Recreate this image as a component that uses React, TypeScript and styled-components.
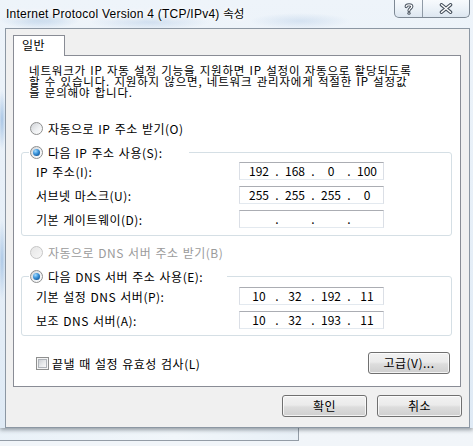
import React from "react";
import styled, { createGlobalStyle } from "styled-components";

const Global = createGlobalStyle`
  html, body { margin: 0; padding: 0; }
  body {
    width: 473px; height: 446px; overflow: hidden;
    background: #f4f7fa;
    font-family: "Noto Sans CJK KR", "Noto Sans", sans-serif;
    font-size: 12px; color: #000;
  }
`;

const Desktop = styled.div`
  position: relative;
  width: 473px;
  height: 446px;
  overflow: hidden;
  background: linear-gradient(180deg, #f7fafc 0%, #f1f5f9 100%);
`;

const BackWindow = styled.div`
  position: absolute;
  left: -10px;
  top: 300px;
  width: 307px;
  height: 139px;
  border: 1px solid #939ca6;
  background: linear-gradient(90deg, #e9f1f8 0%, #f1f6fa 60%, #e8f0f7 100%);
`;

const Window = styled.div`
  position: absolute;
  left: 0;
  top: 0;
  width: 473px;
  height: 428px;
  display: flex;
  flex-direction: column;
  box-shadow: 0 2px 4px rgba(40, 50, 60, 0.45);
  background:
    radial-gradient(ellipse 40px 9px at 40px 20px, rgba(120, 165, 210, 0.35), transparent),
    radial-gradient(ellipse 60px 8px at 150px 22px, rgba(140, 175, 215, 0.3), transparent),
    radial-gradient(ellipse 50px 8px at 300px 21px, rgba(140, 175, 215, 0.25), transparent),
    radial-gradient(ellipse 4px 30px at 2px 120px, rgba(90, 145, 205, 0.45), transparent),
    radial-gradient(ellipse 4px 40px at 2px 260px, rgba(90, 145, 205, 0.4), transparent),
    linear-gradient(180deg, #eef4fa 0%, #dfeaf5 100%);
`;

const TitleBar = styled.div`
  height: 28px;
  display: flex;
  align-items: flex-start;
  flex: none;
`;

const Title = styled.div`
  padding: 5px 0 0 6px;
  line-height: 17px;
  font-family: "Liberation Sans", "Noto Sans CJK KR", sans-serif;
  font-size: 12px;
  letter-spacing: 0.25px;
  color: #000;
  text-shadow: 0 0 6px #fff, 0 0 10px #fff, 0 0 3px #fff;
  white-space: nowrap;
`;

const TitleKo = styled.span`
  font-family: "Noto Sans CJK KR", sans-serif;
  font-size: 11.5px;
  letter-spacing: 0;
`;

const Captions = styled.div`
  margin-left: auto;
  margin-right: 3px;
  display: flex;
  height: 18px;
  border: 1px solid #7d8894;
  border-top: none;
  border-radius: 0 0 5px 5px;
  overflow: hidden;
  background: linear-gradient(180deg, rgba(255,255,255,0.55) 0%, rgba(235,241,247,0.7) 50%, rgba(215,226,237,0.75) 100%);
  box-sizing: border-box;
`;

const CapButton = styled.div<{ $w: number; $divider?: boolean }>`
  width: ${(p) => p.$w}px;
  height: 100%;
  display: flex;
  align-items: center;
  justify-content: center;
  box-sizing: border-box;
  border-right: ${(p) => (p.$divider ? "1px solid #8f9aa6" : "none")};
`;

const Body = styled.div`
  flex: 1;
  margin: 0 3px 0 5px;
  border: 1px solid #8c97a3;
  background: #f0f0f0;
  display: flex;
  flex-direction: column;
  letter-spacing: 0.5px;
  word-spacing: 1px;
`;

const TabStrip = styled.div`
  display: flex;
  padding: 6px 0 0 7px;
`;

const Tab = styled.div`
  position: relative;
  z-index: 1;
  width: 52px;
  height: 21px;
  box-sizing: border-box;
  border: 1px solid #898c95;
  border-bottom: none;
  background: #fff;
  margin-bottom: -1px;
  padding-left: 8px;
  line-height: 17px;
  font-size: 12px;
`;

const Panel = styled.div`
  position: relative;
  z-index: 0;
  margin: 0 8px 0 7px;
  height: 332px;
  box-sizing: border-box;
  border: 1px solid #898c95;
  background: #fff;
  padding-top: 9px;
  display: flex;
  flex-direction: column;
`;

const Description = styled.div`
  height: 33px;
  padding-left: 15px;
  line-height: 11px;
  font-size: 11.5px;
  letter-spacing: 0.8px;
  white-space: nowrap;
`;

const RadioLine = styled.div<{ $mt: number; $disabled?: boolean }>`
  display: flex;
  align-items: center;
  gap: 5px;
  height: 14px;
  margin: ${(p) => p.$mt}px 0 0 16px;
  color: ${(p) => (p.$disabled ? "#9b9b9b" : "#000")};
  white-space: nowrap;
`;

const Radio = styled.span<{ $checked?: boolean; $disabled?: boolean }>`
  flex: none;
  width: 13px;
  height: 13px;
  box-sizing: border-box;
  border-radius: 50%;
  border: 1px solid ${(p) => (p.$disabled ? "#c6c6c6" : "#8e8f8f")};
  background: ${(p) =>
    p.$disabled
      ? "linear-gradient(135deg, #e6e6e6, #f7f7f7)"
      : "linear-gradient(135deg, #cfd2d6 0%, #eef0f2 55%, #ffffff 100%)"};
  display: grid;
  place-items: center;
  &::after {
    content: "";
    width: 7px;
    height: 7px;
    border-radius: 50%;
    display: ${(p) => (p.$checked ? "block" : "none")};
    background: radial-gradient(circle at 35% 30%, #a6dcff 0, #3e97dc 40%, #14599c 80%, #0c3f74 100%);
  }
`;

const Group = styled.fieldset<{ $mt: number; $pt: number; $pb: number }>`
  margin: ${(p) => p.$mt}px 8px 0 7px;
  padding: ${(p) => p.$pt}px 0 ${(p) => p.$pb}px 7px;
  border: 1px solid #d5dfe5;
  border-radius: 3px;
  min-width: 0;
  display: flex;
  flex-direction: column;
  gap: 6px;
`;

const Legend = styled.legend<{ $pr: number }>`
  padding: 0 ${(p) => p.$pr}px 0 1px;
  height: 14px;
  display: flex;
  align-items: center;
  gap: 5px;
  background: #fff;
  white-space: nowrap;
`;

const Row = styled.div`
  display: flex;
  align-items: center;
  height: 18px;
  margin-left: 7px;
`;

const Label = styled.span`
  width: 203px;
  white-space: nowrap;
`;

const IpBox = styled.div`
  display: flex;
  align-items: center;
  width: 145px;
  height: 18px;
  box-sizing: border-box;
  border: 1px solid #dbdfe6;
  border-top-color: #abadb3;
  border-bottom-color: #e3e9ef;
  background: #fff;
  padding-left: 4px;
  font-size: 12px;
  line-height: 16px;
  letter-spacing: 0;
`;

const Octet = styled.span`
  width: 30px;
  text-align: center;
`;

const Dot = styled.span`
  width: 6px;
  text-align: center;
`;

const BottomRow = styled.div`
  margin-top: 16px;
  height: 22px;
  display: flex;
  align-items: center;
  padding: 0 10px 0 22px;
`;

const CheckLabel = styled.label`
  display: flex;
  align-items: center;
  gap: 3px;
  white-space: nowrap;
`;

const Check = styled.span`
  width: 13px;
  height: 13px;
  box-sizing: border-box;
  border: 1px solid #8e8f8f;
  background: #f4f4f4;
  display: grid;
  place-items: center;
  &::after {
    content: "";
    width: 9px;
    height: 9px;
    box-sizing: border-box;
    border: 1px solid #b0b4ba;
    background: linear-gradient(135deg, #cdd0d4 0%, #e6e8ea 50%, #f8f8f8 100%);
  }
`;

const Button = styled.button<{ $w: number; $ml?: string }>`
  width: ${(p) => p.$w}px;
  height: 22px;
  margin-left: ${(p) => p.$ml ?? "0"};
  box-sizing: border-box;
  border: 1px solid #707070;
  border-radius: 3px;
  background: linear-gradient(180deg, #f2f2f2 0%, #ebebeb 45%, #dddddd 55%, #cfcfcf 100%);
  box-shadow: inset 0 0 0 1px rgba(255, 255, 255, 0.75);
  font-family: "Noto Sans CJK KR", sans-serif;
  font-size: 12px;
  letter-spacing: 0.5px;
  color: #000;
  padding: 0;
  line-height: 18px;
`;

const Footer = styled.div`
  margin-top: 8px;
  display: flex;
  justify-content: flex-end;
  gap: 10px;
  padding-right: 7px;
`;

const Ip = ({ v }: { v: string[] }) => (
  <IpBox>
    <Octet>{v[0]}</Octet>
    <Dot>.</Dot>
    <Octet>{v[1]}</Octet>
    <Dot>.</Dot>
    <Octet>{v[2]}</Octet>
    <Dot>.</Dot>
    <Octet>{v[3]}</Octet>
  </IpBox>
);

const HelpIcon = () => (
  <svg width="10" height="12" viewBox="0 0 10 12">
    <path d="M2.2 3.6 C2.2 1.2 7.8 1.2 7.8 3.6 C7.8 5.4 5 5.4 5 7.6" fill="none" stroke="#4a5460" strokeWidth="3.2" strokeLinecap="round" />
    <circle cx="5" cy="10.2" r="1.6" fill="#4a5460" />
    <path d="M2.2 3.6 C2.2 1.2 7.8 1.2 7.8 3.6 C7.8 5.4 5 5.4 5 7.6" fill="none" stroke="#fff" strokeWidth="1.2" strokeLinecap="round" />
    <circle cx="5" cy="10.2" r="0.6" fill="#fff" />
  </svg>
);

const CloseIcon = () => (
  <svg width="14" height="11" viewBox="0 0 14 11">
    <path d="M2.5 1.8 L11.5 9.2 M11.5 1.8 L2.5 9.2" fill="none" stroke="#4a5460" strokeWidth="3.6" strokeLinecap="round" />
    <path d="M2.5 1.8 L11.5 9.2 M11.5 1.8 L2.5 9.2" fill="none" stroke="#fff" strokeWidth="1.4" strokeLinecap="round" />
  </svg>
);

export default function App() {
  return (
    <Desktop>
      <Global />
      <BackWindow />
      <Window>
        <TitleBar>
          <Title>
            Internet Protocol Version 4 (TCP/IPv4) <TitleKo>속성</TitleKo>
          </Title>
          <Captions>
            <CapButton $w={28} $divider>
              <HelpIcon />
            </CapButton>
            <CapButton $w={46}>
              <CloseIcon />
            </CapButton>
          </Captions>
        </TitleBar>
        <Body>
          <TabStrip>
            <Tab>일반</Tab>
          </TabStrip>
          <Panel>
            <Description>
              네트워크가 IP 자동 설정 기능을 지원하면 IP 설정이 자동으로 할당되도록
              <br />
              할 수 있습니다. 지원하지 않으면, 네트워크 관리자에게 적절한 IP 설정값
              <br />을 문의해야 합니다.
            </Description>
            <RadioLine $mt={23}>
              <Radio />
              자동으로 IP 주소 받기(O)
            </RadioLine>
            <Group $mt={10} $pt={3} $pb={7}>
              <Legend $pr={26}>
                <Radio $checked />
                다음 IP 주소 사용(S):
              </Legend>
              <Row>
                <Label>IP 주소(I):</Label>
                <Ip v={["192", "168", "0", "100"]} />
              </Row>
              <Row>
                <Label>서브넷 마스크(U):</Label>
                <Ip v={["255", "255", "255", "0"]} />
              </Row>
              <Row>
                <Label>기본 게이트웨이(D):</Label>
                <Ip v={["", "", "", ""]} />
              </Row>
            </Group>
            <RadioLine $mt={9} $disabled>
              <Radio $disabled />
              자동으로 DNS 서버 주소 받기(B)
            </RadioLine>
            <Group $mt={10} $pt={4} $pb={6}>
              <Legend $pr={24}>
                <Radio $checked />
                다음 DNS 서버 주소 사용(E):
              </Legend>
              <Row>
                <Label>기본 설정 DNS 서버(P):</Label>
                <Ip v={["10", "32", "192", "11"]} />
              </Row>
              <Row>
                <Label>보조 DNS 서버(A):</Label>
                <Ip v={["10", "32", "193", "11"]} />
              </Row>
            </Group>
            <BottomRow>
              <CheckLabel>
                <Check />
                끝낼 때 설정 유효성 검사(L)
              </CheckLabel>
              <Button $w={82} $ml="auto">
                고급(V)...
              </Button>
            </BottomRow>
          </Panel>
          <Footer>
            <Button $w={85}>확인</Button>
            <Button $w={85}>취소</Button>
          </Footer>
        </Body>
      </Window>
    </Desktop>
  );
}
